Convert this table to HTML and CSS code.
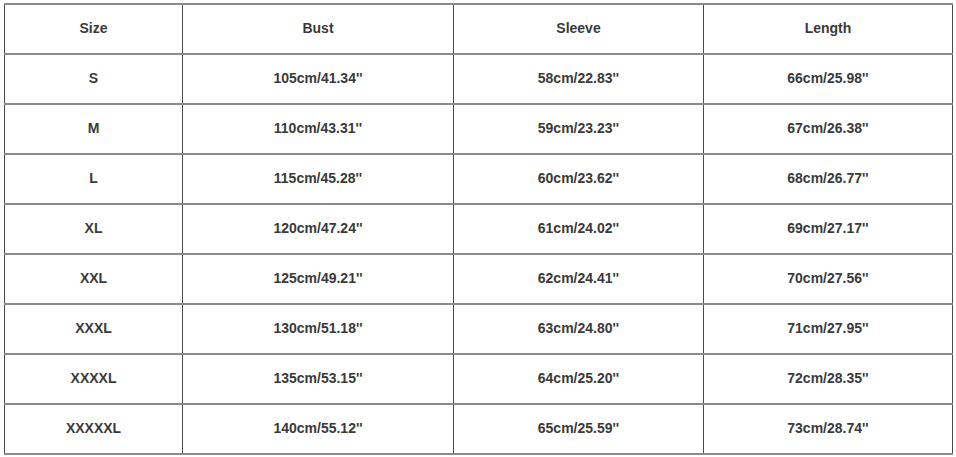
FILE: index.html
```html
<!DOCTYPE html>
<html>
<head>
<meta charset="utf-8">
<link rel="stylesheet" href="styles.css">
</head>
<body>
<table class="size-table">
  <colgroup>
    <col class="c1"><col class="c2"><col class="c3"><col class="c4">
  </colgroup>
  <tr><td>Size</td><td>Bust</td><td>Sleeve</td><td>Length</td></tr>
  <tr><td>S</td><td>105cm/41.34''</td><td>58cm/22.83''</td><td>66cm/25.98''</td></tr>
  <tr><td>M</td><td>110cm/43.31''</td><td>59cm/23.23''</td><td>67cm/26.38''</td></tr>
  <tr><td>L</td><td>115cm/45.28''</td><td>60cm/23.62''</td><td>68cm/26.77''</td></tr>
  <tr><td>XL</td><td>120cm/47.24''</td><td>61cm/24.02''</td><td>69cm/27.17''</td></tr>
  <tr><td>XXL</td><td>125cm/49.21''</td><td>62cm/24.41''</td><td>70cm/27.56''</td></tr>
  <tr><td>XXXL</td><td>130cm/51.18''</td><td>63cm/24.80''</td><td>71cm/27.95''</td></tr>
  <tr><td>XXXXL</td><td>135cm/53.15''</td><td>64cm/25.20''</td><td>72cm/28.35''</td></tr>
  <tr><td>XXXXXL</td><td>140cm/55.12''</td><td>65cm/25.59''</td><td>73cm/28.74''</td></tr>
</table>
</body>
</html>
```
FILE: styles.css
```css
html, body {
  margin: 0;
  padding: 0;
  background: #ffffff;
}
body {
  padding: 3px 4px 4px 4px;
}
.size-table {
  border-collapse: collapse;
  table-layout: fixed;
  width: 948px;
  font-family: "Liberation Sans", Arial, sans-serif;
  font-size: 14px;
  font-weight: bold;
  color: #3a3a3a;
}
.c1 { width: 178px; }
.c2 { width: 271px; }
.c3 { width: 250px; }
.c4 { width: 249px; }
.size-table td {
  height: 50px;
  padding: 0 0 3px 0;
  box-sizing: border-box;
  text-align: center;
  vertical-align: middle;
  border-top: 2px solid #8a8a8a;
  border-bottom: 2px solid #8a8a8a;
  border-left: 1px solid #4a4a4a;
  border-right: 1px solid #4a4a4a;
}
```
